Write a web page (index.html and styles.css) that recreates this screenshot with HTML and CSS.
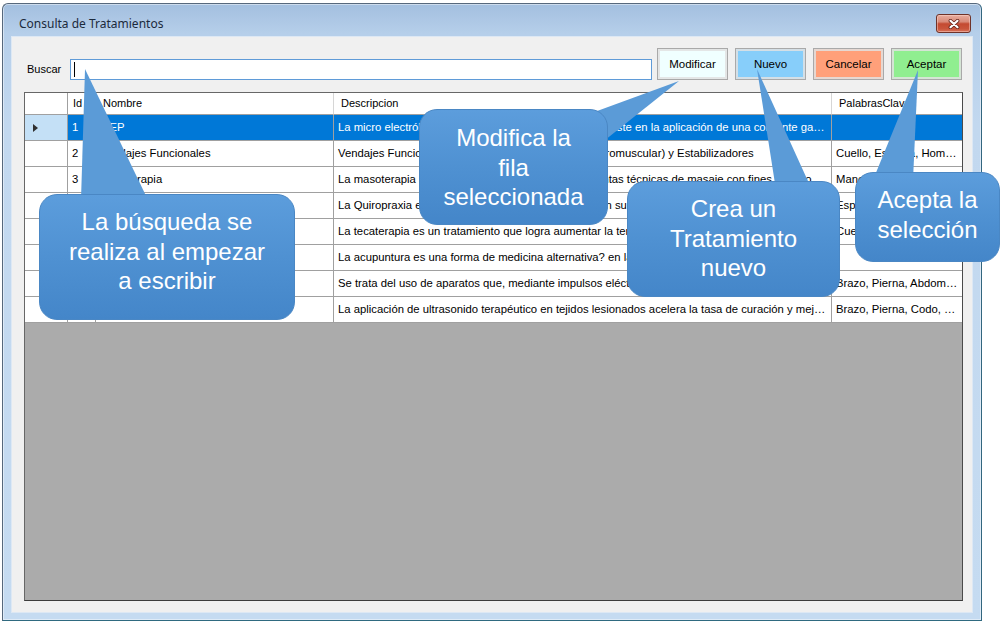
FILE: index.html
```html
<!DOCTYPE html>
<html lang="es">
<head>
<meta charset="utf-8">
<title>Consulta de Tratamientos</title>
<link rel="stylesheet" href="styles.css">
</head>
<body>
<div class="window">
  <div class="titlebar">
    <span class="title">Consulta de Tratamientos</span>
    <div class="close">
      <svg width="14" height="10" viewBox="0 0 14 10">
        <path d="M3.5 1.8 L10.5 8.2 M10.5 1.8 L3.5 8.2" stroke="#6a271d" stroke-width="3.8" stroke-linecap="round" fill="none"/>
        <path d="M3.5 1.8 L10.5 8.2 M10.5 1.8 L3.5 8.2" stroke="#ffffff" stroke-width="2.2" stroke-linecap="round" fill="none"/>
      </svg>
    </div>
  </div>
  <div class="client">
    <div class="toolbar">
      <span class="lbl">Buscar</span>
      <div class="search"><span class="caret"></span></div>
      <div class="btn btn-mod">Modificar</div>
      <div class="btn btn-new">Nuevo</div>
      <div class="btn btn-cancel">Cancelar</div>
      <div class="btn btn-ok">Aceptar</div>
    </div>
    <div class="grid">
      <div class="row head">
        <div class="cell rh"></div>
        <div class="cell hc hid">Id</div>
        <div class="cell hc">Nombre</div>
        <div class="cell hc">Descripcion</div>
        <div class="cell hc last">PalabrasClave</div>
      </div>
      <div class="row sel">
        <div class="cell rh"><span class="arrow"></span></div>
        <div class="cell">1</div>
        <div class="cell">MEP</div>
        <div class="cell">La micro electrólisis percutánea ecoguiada (MEP) consiste en la aplicación de una corriente galvánica a través de una aguja</div>
        <div class="cell last"></div>
      </div>
      <div class="row">
        <div class="cell rh"></div>
        <div class="cell">2</div>
        <div class="cell">Vendajes Funcionales</div>
        <div class="cell">Vendajes Funcionales de dos tipos: Kinesiotape (Neuromuscular) y Estabilizadores</div>
        <div class="cell last">Cuello, Espalda, Hombro, Rodilla</div>
      </div>
      <div class="row">
        <div class="cell rh"></div>
        <div class="cell">3</div>
        <div class="cell">Masoterapia</div>
        <div class="cell">La masoterapia se puede definir como el uso de distintas técnicas de masaje con fines médicos o terapéuticos</div>
        <div class="cell last">Manos, Espalda, Pierna</div>
      </div>
      <div class="row">
        <div class="cell rh"></div>
        <div class="cell">4</div>
        <div class="cell">Quiropraxia</div>
        <div class="cell">La Quiropraxia es una disciplina que trata el cuerpo en su totalidad</div>
        <div class="cell last">Espalda, Cuello</div>
      </div>
      <div class="row">
        <div class="cell rh"></div>
        <div class="cell">5</div>
        <div class="cell">Tecaterapia</div>
        <div class="cell">La tecaterapia es un tratamiento que logra aumentar la temperatura interna de los tejidos</div>
        <div class="cell last">Cuello, Espalda</div>
      </div>
      <div class="row">
        <div class="cell rh"></div>
        <div class="cell">6</div>
        <div class="cell">Acupuntura</div>
        <div class="cell">La acupuntura es una forma de medicina alternativa? en la que se insertan agujas</div>
        <div class="cell last"></div>
      </div>
      <div class="row">
        <div class="cell rh"></div>
        <div class="cell">7</div>
        <div class="cell">Electroterapia</div>
        <div class="cell">Se trata del uso de aparatos que, mediante impulsos eléctricos, estimulan los músculos</div>
        <div class="cell last">Brazo, Pierna, Abdomen, Espalda</div>
      </div>
      <div class="row">
        <div class="cell rh"></div>
        <div class="cell">8</div>
        <div class="cell">Ultrasonido</div>
        <div class="cell">La aplicación de ultrasonido terapéutico en tejidos lesionados acelera la tasa de curación y mejora la calidad</div>
        <div class="cell last">Brazo, Pierna, Codo, Hombro</div>
      </div>
    </div>
  </div>
</div>

<div class="overlay">
  <svg class="pointers" width="1005" height="625" viewBox="0 0 1005 625">
    <polygon points="85,69 81,200 148,200"/>
    <polygon points="679,81 578,118 590,152"/>
    <polygon points="757,69 776,190 812,190"/>
    <polygon points="918,70 873,180 913,180"/>
  </svg>
  <div class="callout c1">La búsqueda se<br>realiza al empezar<br>a escribir</div>
  <div class="callout c2">Modifica la<br>fila<br>seleccionada</div>
  <div class="callout c3">Crea un<br>Tratamiento<br>nuevo</div>
  <div class="callout c4">Acepta la<br>selección</div>
</div>
</body>
</html>
```
FILE: styles.css
```css
html, body {
  margin: 0;
  padding: 0;
  background: #ffffff;
}
body {
  width: 1005px;
  height: 625px;
  overflow: hidden;
  position: relative;
  font-family: "Liberation Sans", Arial, sans-serif;
  font-size: 11px;
  color: #000;
}

/* ---------- window frame ---------- */
.window {
  margin: 3px 0 0 2px;
  width: 980px;
  height: 618px;
  box-sizing: border-box;
  border: 1px solid #56687c;
  border-right-color: #33667f;
  border-bottom-color: #2f6a80;
  border-radius: 6px 6px 0 0;
  padding: 0 9px 8px 9px;
  background: linear-gradient(to bottom, #a3bfdf 0px, #b6cfea 30px, #c2d8ef 120px, #c5dbf1 100%);
  box-shadow: inset 0 0 0 1px rgba(255, 255, 255, 0.45);
}

.titlebar {
  height: 33px;
  display: flex;
  align-items: flex-start;
}
.title {
  font-family: "Noto Sans", "Liberation Sans", sans-serif;
  font-size: 12px;
  line-height: 16px;
  color: #1b2a3c;
  padding: 12px 0 0 7px;
}
.close {
  margin: 10px 1px 0 auto;
  width: 35px;
  height: 19px;
  box-sizing: border-box;
  border: 1px solid #6f3329;
  border-radius: 3px;
  background: linear-gradient(to bottom, #e8ad9f 0%, #d98a78 40%, #c44a31 52%, #c9553b 80%, #d9735a 100%);
  box-shadow: inset 0 0 0 1px rgba(255, 220, 210, 0.45);
  display: flex;
  align-items: center;
  justify-content: center;
}

.client {
  height: 575px;
  background: #f0f0f0;
  box-shadow: 0 0 0 1px #dde8f4;
  display: flex;
  flex-direction: column;
}

/* ---------- toolbar ---------- */
.toolbar {
  display: flex;
  align-items: flex-end;
  padding: 11px 0 0 15px;
  height: 32px;
}
.lbl {
  width: 43px;
  height: 21px;
  line-height: 21px;
  font-size: 11px;
  color: #000;
}
.search {
  width: 582px;
  height: 21px;
  box-sizing: border-box;
  border: 1px solid #5f9bd8;
  background: #fff;
  position: relative;
}
.caret {
  position: absolute;
  left: 3px;
  top: 2px;
  width: 1px;
  height: 15px;
  background: #000;
}
.btn {
  width: 71px;
  height: 32px;
  box-sizing: border-box;
  border: 1px solid #a9a9a9;
  box-shadow: inset 0 0 0 2px rgba(226, 226, 226, 0.85);
  margin-left: 7px;
  display: flex;
  align-items: center;
  justify-content: center;
  font-size: 11.5px;
  color: #000;
}
.btn-mod { margin-left: 5px; background: #f0ffff; }
.btn-new { background: #87cefa; }
.btn-cancel { background: #ffa07a; }
.btn-ok { background: #90ee90; }

/* ---------- data grid ---------- */
.grid {
  margin: 12px 9px 11px 12px;
  flex: 1;
  border: 1px solid #676767;
  border-right-color: #4a4a4a;
  border-bottom-color: #3c3c3c;
  background: #ababab;
  overflow: hidden;
}
.row {
  display: grid;
  grid-template-columns: 43px 28px 238px 498px 130px;
  height: 26px;
}
.row.head {
  height: 22px;
}
.cell {
  box-sizing: border-box;
  background: #fff;
  border-right: 1px solid #a0a0a0;
  border-bottom: 1px solid #a0a0a0;
  padding: 0 4px;
  font-size: 11.3px;
  line-height: 25px;
  white-space: nowrap;
  overflow: hidden;
  text-overflow: ellipsis;
}
.cell.last {
  border-right: none;
}
.head .cell {
  font-size: 11px;
  line-height: 21px;
  border-right-color: #d6d6d6;
  border-bottom-color: #a0a0a0;
  padding-left: 7px;
}
.head .cell.hid {
  padding-left: 5px;
}
.head .cell.rh {
  border-right-color: #a0a0a0;
}
.sel .cell {
  background: #0078d7;
  color: #fff;
}
.sel .cell.rh {
  background: #c4e0f6;
  display: flex;
  align-items: center;
}
.arrow {
  display: block;
  width: 0;
  height: 0;
  margin-left: 4px;
  border-left: 5px solid #303030;
  border-top: 4px solid transparent;
  border-bottom: 4px solid transparent;
}

/* ---------- callouts overlay ---------- */
.overlay {
  position: absolute;
  left: 0;
  top: 0;
  width: 1005px;
  height: 625px;
  pointer-events: none;
}
.pointers {
  position: absolute;
  left: 0;
  top: 0;
}
.pointers polygon {
  fill: #5b9bd7;
}
.callout {
  position: absolute;
  box-sizing: border-box;
  border-radius: 18px;
  background: linear-gradient(to bottom, #5c9ddc 0%, #4f91d2 50%, #4486c9 100%);
  border: 1px solid #4a87c4;
  color: #ffffff;
  font-family: "Liberation Sans", Arial, sans-serif;
  font-size: 24px;
  line-height: 29.5px;
  text-align: center;
}
.c1 { left: 39px; top: 194px; width: 256px; height: 126px; padding-top: 12px; }
.c2 { left: 419px; top: 109px; width: 189px; height: 116px; padding-top: 13px; }
.c3 { left: 627px; top: 181px; width: 213px; height: 116px; padding-top: 12px; }
.c4 { left: 855px; top: 172px; width: 145px; height: 90px; padding-top: 12px; }
```
